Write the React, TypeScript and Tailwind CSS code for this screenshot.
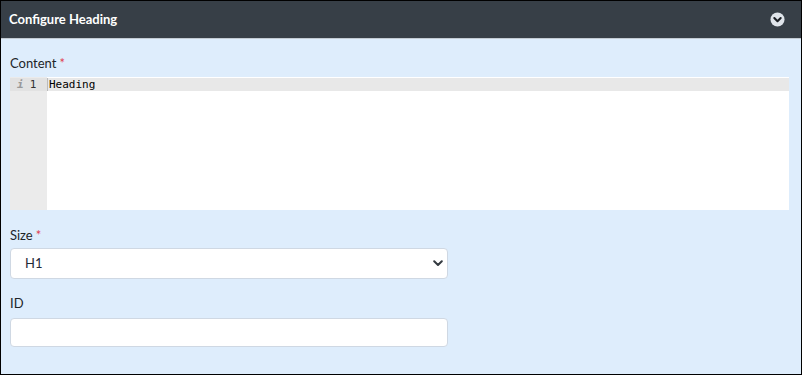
import { useState } from "react";

function ChevronCircle() {
  return (
    <svg width="15" height="15" viewBox="0 0 16 16">
      <circle cx="8" cy="8" r="7.5" fill="#dfe4ea" />
      <path d="M4.6 6.4 L8 9.8 L11.4 6.4" fill="none" stroke="#1b1f24" strokeWidth="2.2" strokeLinecap="round" strokeLinejoin="round" />
    </svg>
  );
}

function Label({ text, required }: { text: string; required?: boolean }) {
  return (
    <label className="block h-[18px] text-[13px] leading-[18px] text-[#212529]">
      {text}
      {required && <span className="ml-[3px] text-[#e0414f]">*</span>}
    </label>
  );
}

export default function App() {
  const [size, setSize] = useState("H1");
  const [id, setId] = useState("");

  return (
    <div
      className="h-[375px] w-[802px] overflow-hidden border border-black bg-[#deedfc]"
      style={{ fontFamily: 'Lato, "Noto Sans", sans-serif' }}
    >
      <header className="flex h-[38px] items-center justify-between border-b border-[#c3cbd3] bg-[#373f47] pl-[8px] pr-[16px]">
        <h1 className="text-[13px] font-bold text-white">Configure Heading</h1>
        <ChevronCircle />
      </header>

      <div className="pl-[9px] pr-[12px] pt-[15px]">
        <Label text="Content" required />

        <div className="mt-[5px] flex h-[133px] bg-white">
          <div className="w-[37px] shrink-0 bg-[#ebebeb] pt-px">
            <div className="flex h-[13px] items-center gap-[6px] bg-[#e2e2e2] pl-[7px] text-[11px] leading-[13px] text-[#333]" style={{ fontFamily: '"DejaVu Sans Mono", monospace' }}>
              <span className="font-bold italic text-[#999]">i</span>
              <span>1</span>
            </div>
          </div>
          <div className="flex-1 pt-px">
            <div className="h-[13px] border-l border-[#bbb] bg-[#e8e8e8] pl-px text-[11px] leading-[13px] text-black" style={{ fontFamily: '"DejaVu Sans Mono", monospace' }}>
              Heading
            </div>
          </div>
        </div>

        <div className="mt-[16px]">
          <Label text="Size" required />
        </div>
        <div className="relative mt-[4px] w-[438px]">
          <select
            value={size}
            onChange={(e) => setSize(e.target.value)}
            className="h-[31px] w-full appearance-none rounded-[4px] border border-[#cfd8e3] bg-white pl-[14px] text-[13px] text-[#1f2937] outline-none"
          >
            <option>H1</option>
            <option>H2</option>
            <option>H3</option>
          </select>
          <svg className="pointer-events-none absolute right-[5px] top-[12px]" width="10" height="7" viewBox="0 0 10 7">
            <path d="M1.2 1.2 L5 5 L8.8 1.2" fill="none" stroke="#343a40" strokeWidth="2" strokeLinecap="round" strokeLinejoin="round" />
          </svg>
        </div>

        <div className="mt-[15px]">
          <Label text="ID" />
        </div>
        <input
          value={id}
          onChange={(e) => setId(e.target.value)}
          className="mt-[6px] block h-[29px] w-[438px] rounded-[4px] border border-[#cfd8e3] bg-white px-[12px] text-[13px] outline-none"
        />
      </div>
    </div>
  );
}
